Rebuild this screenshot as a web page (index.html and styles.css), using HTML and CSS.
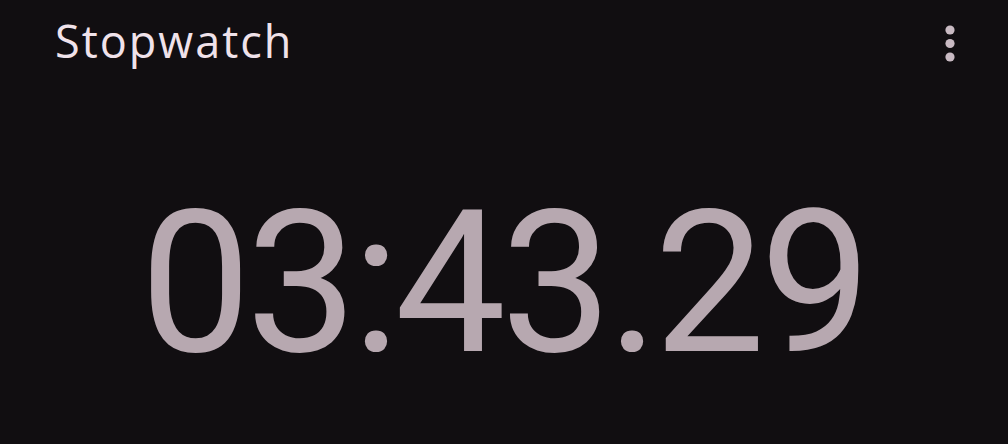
FILE: index.html
```html
<!DOCTYPE html>
<html>
<head>
<meta charset="utf-8">
<link rel="stylesheet" href="styles.css">
</head>
<body>
<div class="app">
  <header class="bar">
    <h1 class="title">Stopwatch</h1>
    <button class="menu" aria-label="More options">
      <svg width="12" height="40" viewBox="0 0 12 40">
        <circle cx="6" cy="6" r="4.6" fill="#c9bac3"/>
        <circle cx="6" cy="19.5" r="4.6" fill="#c9bac3"/>
        <circle cx="6" cy="33" r="4.6" fill="#c9bac3"/>
      </svg>
    </button>
  </header>
  <main class="display">
    <div class="time">03:43.29</div>
  </main>
</div>
</body>
</html>
```
FILE: styles.css
```css
html, body {
  margin: 0;
  padding: 0;
  background: #110e11;
  height: 100%;
}
.app {
  width: 1008px;
  height: 444px;
  display: flex;
  flex-direction: column;
  overflow: hidden;
}
.bar {
  display: flex;
  align-items: flex-start;
  justify-content: space-between;
  padding: 13px 52px 0 55px;
  height: 72px;
  box-sizing: border-box;
}
.title {
  margin: 0;
  font-family: "Open Sans", sans-serif;
  font-weight: 400;
  font-size: 45px;
  line-height: 56px;
  color: #f0e2ea;
  letter-spacing: 2px;
}
.menu {
  background: none;
  border: 0;
  padding: 0;
  margin-top: 11px;
  width: 12px;
  height: 40px;
}
.menu svg { display: block; }
.display {
  flex: 1;
  display: flex;
  justify-content: center;
}
.time {
  font-family: Roboto, sans-serif;
  font-weight: 400;
  font-size: 198px;
  line-height: 1;
  color: #b7a8b0;
  letter-spacing: -5.2px;
  margin-top: 112px;
  margin-left: -2px;
}
```
